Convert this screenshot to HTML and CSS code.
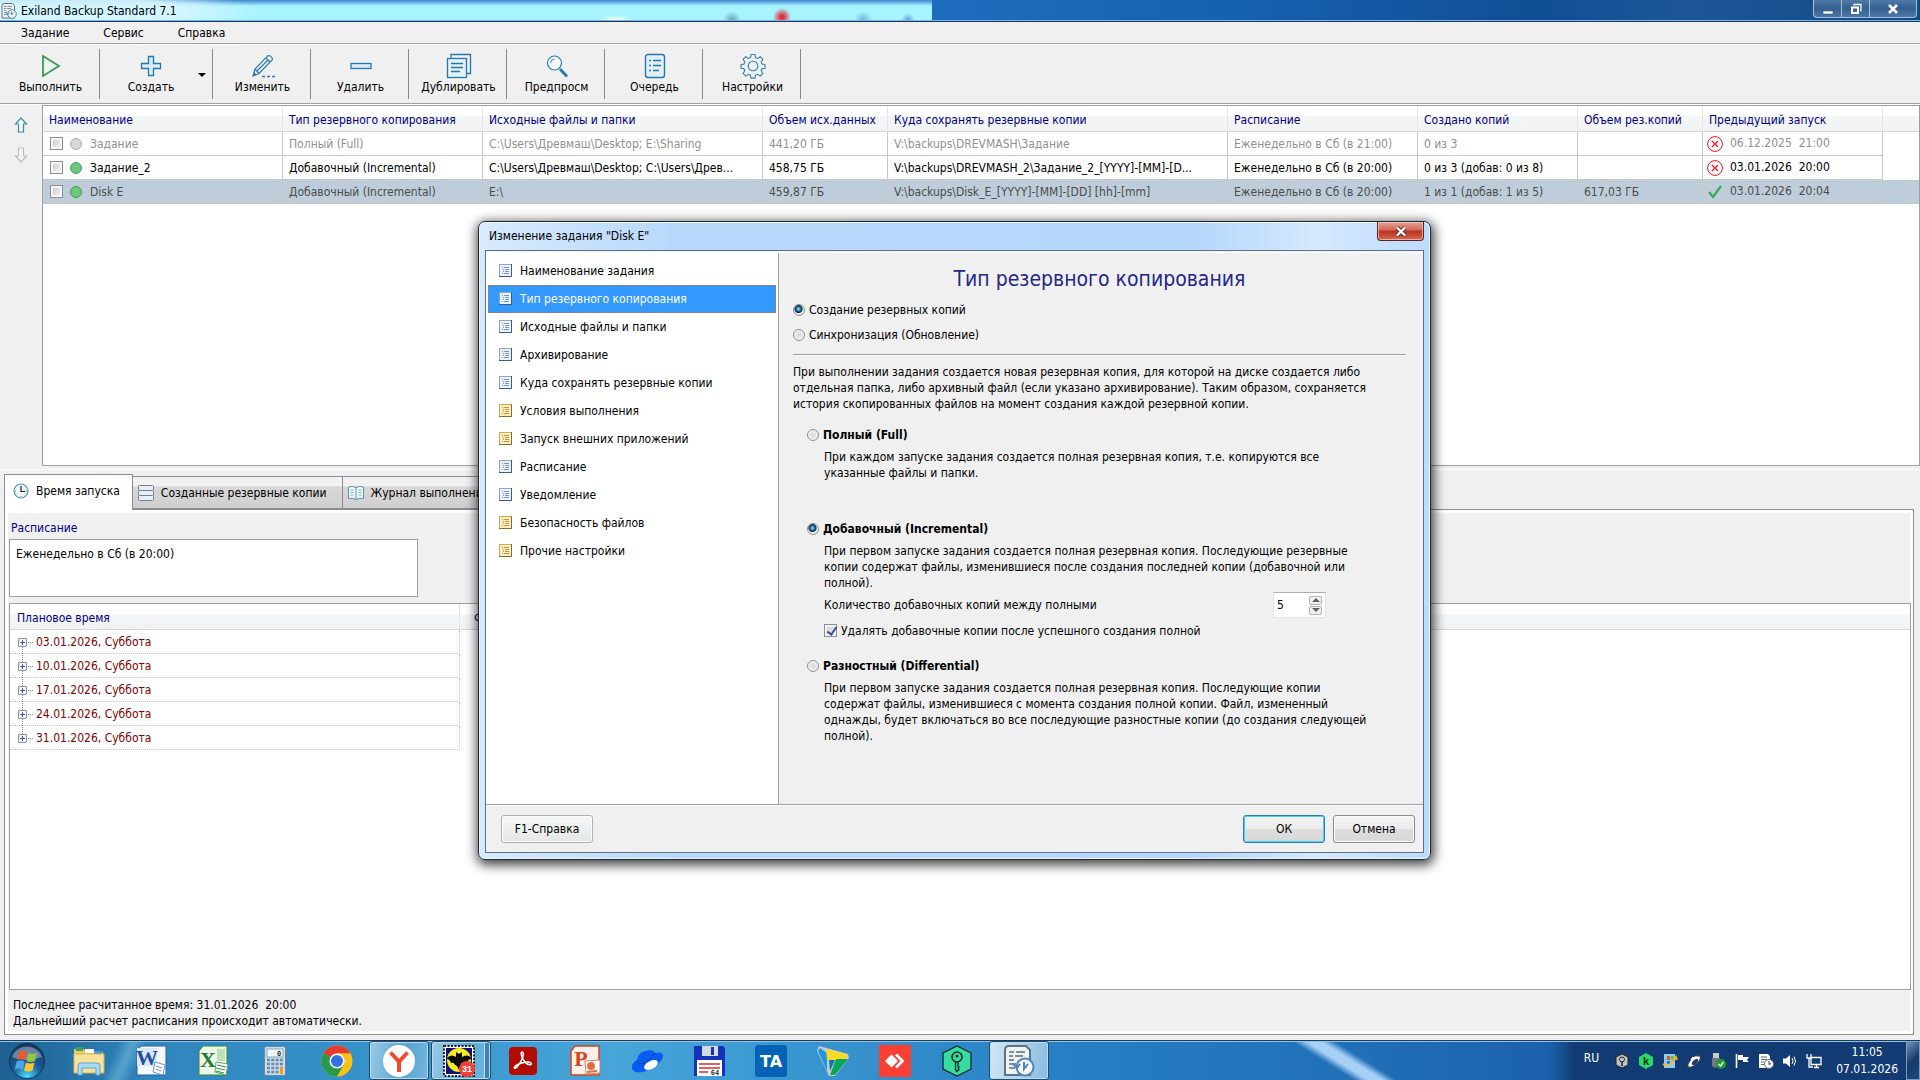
FILE: index.html
```html
<!DOCTYPE html>
<html lang="ru">
<head>
    <meta charset="UTF-8">
    <meta name="viewport" content="width=device-width, initial-scale=1.0">
    <title>Exiland Backup Standard 7.1</title>
    <link rel="stylesheet" href="styles.css">
</head>
<body>
    <!-- shared icons -->
    <svg class="sprites" aria-hidden="true">
        <symbol id="i-page" viewBox="0 0 13 13">
            <rect x=".5" y=".5" width="12" height="12" fill="currentColor" stroke="#8fa6c8"/>
            <path d="M12.5 0v12.5H0" fill="none" stroke="#3d5a86"/>
            <path d="M3 3.5h1M5 3.5h5M4 5.5h1M6 5.5h4M4 7.5h1M6 7.5h4M3 9.5h1M5 9.5h5" stroke="#7c93bd"/>
        </symbol>
        <symbol id="i-page-y" viewBox="0 0 13 13">
            <rect x=".5" y=".5" width="12" height="12" fill="#fbeebb" stroke="#c9ab5a"/>
            <path d="M12.5 0v12.5H0" fill="none" stroke="#8a6a2b"/>
            <path d="M3 3.5h1M5 3.5h5M4 5.5h1M6 5.5h4M4 7.5h1M6 7.5h4M3 9.5h1M5 9.5h5" stroke="#b79a50"/>
        </symbol>
        <symbol id="i-fail" viewBox="0 0 16 16">
            <circle cx="8" cy="8" r="7.4" fill="#fff" stroke="#e8111c"/>
            <path d="M5 5l6 6M11 5l-6 6" stroke="#e8111c" stroke-width="1.2"/>
        </symbol>
        <symbol id="i-app" viewBox="0 0 32 32">
            <path d="M6 1h17l4 4v25H2V5q0-4 4-4z" fill="#eef2f5" stroke="#5f7482" stroke-width="2"/>
            <path d="M6 7h5M6 11h4M6 15h5M13 7h9M12 11h8M6 19h7M6 23h6" stroke="#7d8f9b" stroke-width="2"/>
            <circle cx="22" cy="22" r="8.5" fill="#f5f9ff" stroke="#4f86c2" stroke-width="2"/>
            <path d="M21 17v7l4-5M10 19l4 4 3-4" fill="none" stroke="#4f86c2" stroke-width="2"/>
        </symbol>
    </svg>

    <header class="titlebar">
        <svg class="app-icon"><use href="#i-app"/></svg>
        <h1>Exiland Backup Standard 7.1</h1>
        <div class="window-buttons">
            <button aria-label="Свернуть"><svg width="12" height="12"><path d="M1 8h10v3H1z" fill="#fff" stroke="#33507a" stroke-width=".6"/></svg></button>
            <button aria-label="Восстановить"><svg width="12" height="12"><path d="M4 2.5V1.5h7v6h-1" fill="none" stroke="#fff" stroke-width="1.3"/><path d="M2 4.5h6v5.5H2z" fill="none" stroke="#fff" stroke-width="2"/></svg></button>
            <button aria-label="Закрыть"><svg width="12" height="12"><path d="M2 2l8 8M10 2l-8 8" stroke="#fff" stroke-width="2.6"/></svg></button>
        </div>
    </header>

    <nav class="menubar">
        <button>Задание</button>
        <button>Сервис</button>
        <button>Справка</button>
    </nav>

    <div class="toolbar">
        <button class="tool">
            <svg width="26" height="26" viewBox="0 0 26 26"><path d="M5 3l16 10L5 23z" fill="#e9f5ec" stroke="#3c9a55" stroke-width="1.8"/></svg>
            <span>Выполнить</span>
        </button>
        <button class="tool create">
            <svg width="26" height="26" viewBox="0 0 26 26"><path d="M10.500 3.500h5v7h7v5h-7v7h-5v-7h-7v-5h7z" fill="#dbeaf5" stroke="#2379ab" stroke-width="1.3"/></svg>
            <span>Создать</span>
            <i class="drop"></i>
        </button>
        <button class="tool">
            <svg width="26" height="26" viewBox="0 0 26 26"><path d="M3 23l2-7L18 2.500q4 0 4.500 4L9 20.500zM5 16l4 4.500M16 5l4.500 4.500M7.500 17.500L18 7" fill="none" stroke="#2c7cab" stroke-width="1.200"/><path d="M3 23l1-4 3 3z" fill="#2c7cab"/><path d="M12 23.500h13" stroke="#2c7cab" stroke-width="1.300" stroke-dasharray="3 2"/></svg>
            <span>Изменить</span>
        </button>
        <button class="tool">
            <svg width="26" height="26" viewBox="0 0 26 26"><rect x="3" y="10.500" width="20" height="5" fill="#dbeaf5" stroke="#2379ab" stroke-width="1.300"/></svg>
            <span>Удалить</span>
        </button>
        <button class="tool">
            <svg width="26" height="26" viewBox="0 0 26 26"><path d="M5 5V1.500h19.500v19H21" fill="none" stroke="#2379ab" stroke-width="1.300"/><rect x="1.500" y="5.500" width="19" height="19" fill="#e4f0f8" stroke="#2379ab" stroke-width="1.300"/><path d="M5 10.500h12M5 14.500h12M5 18.500h9" stroke="#2379ab" stroke-width="1.300"/></svg>
            <span>Дублировать</span>
        </button>
        <button class="tool">
            <svg width="26" height="26" viewBox="0 0 26 26"><circle cx="10.500" cy="10" r="7" fill="#f3f8fb" stroke="#2c7cab" stroke-width="1.200"/><path d="M6.500 10q.5-4 4-4" fill="none" stroke="#2c7cab"/><path d="M16 16l7 7.500" stroke="#2c7cab" stroke-width="3"/></svg>
            <span>Предпросм</span>
        </button>
        <button class="tool">
            <svg width="26" height="26" viewBox="0 0 26 26"><rect x="3.500" y="1.500" width="19" height="23" rx="2.500" fill="#e4f0f8" stroke="#2379ab" stroke-width="1.400"/><path d="M7 7.500h2M11 7.500h8M7 12.500h2M11 12.500h8M7 17.500h2M11 17.500h6" stroke="#2379ab" stroke-width="1.400"/></svg>
            <span>Очередь</span>
        </button>
        <button class="tool">
            <svg width="26" height="26" viewBox="0 0 26 26"><path d="M11 1.500h4l.6 3.200 2 .8 2.700-1.800 2.600 2.700-1.700 2.600.8 2 3 .6v3.600l-3 .6-.8 2 1.700 2.600-2.600 2.700-2.700-1.800-2 .8-.6 3h-4l-.6-3-2-.8-2.700 1.800-2.600-2.700 1.700-2.600-.8-2-3-.6v-3.600l3-.6.8-2L3.100 6.400l2.600-2.700 2.700 1.800 2-.8z" fill="#e9f1f6" stroke="#3a7f9f" stroke-width="1.100"/><circle cx="13" cy="13" r="4.800" fill="#f0f0f0" stroke="#3a7f9f" stroke-width="1.100"/></svg>
            <span>Настройки</span>
        </button>
    </div>

    <section class="tasks">
        <div class="order">
            <button aria-label="Вверх"><svg width="14" height="18" viewBox="0 0 14 18"><path d="M7 2l5.500 6H9.500v8h-5V8h-3z" fill="#f7fafc" stroke="#3f86ab" stroke-width="1.200"/></svg></button>
            <button aria-label="Вниз" disabled><svg width="14" height="18" viewBox="0 0 14 18"><path d="M7 16l5.500-6H9.500V2h-5v8h-3z" fill="#f5f5f5" stroke="#bdbdbd" stroke-width="1.200"/></svg></button>
        </div>
        <div class="task-list">
            <table class="grid">
                <colgroup>
                    <col class="w240"><col class="w200"><col class="w280"><col class="w125"><col class="w340"><col class="w190"><col class="w160"><col class="w125"><col class="w180"><col>
                </colgroup>
                <thead>
                    <tr><th>Наименование</th><th>Тип резервного копирования</th><th>Исходные файлы и папки</th><th>Объем исх.данных</th><th>Куда сохранять резервные копии</th><th>Расписание</th><th>Создано копий</th><th>Объем рез.копий</th><th>Предыдущий запуск</th><th></th></tr>
                </thead>
                <tbody>
                    <tr class="off">
                        <td><label class="name"><input type="checkbox"><i class="dot"></i>Задание</label></td>
                        <td>Полный (Full)</td><td>C:\Users\Древмаш\Desktop; E:\Sharing</td><td>441,20 ГБ</td><td>V:\backups\DREVMASH\Задание</td><td>Еженедельно в Сб (в 21:00)</td><td>0 из 3</td><td></td>
                        <td class="last-run"><svg width="16" height="16"><use href="#i-fail"/></svg>06.12.2025&nbsp; 21:00</td><td></td>
                    </tr>
                    <tr>
                        <td><label class="name"><input type="checkbox"><i class="dot"></i>Задание_2</label></td>
                        <td>Добавочный (Incremental)</td><td>C:\Users\Древмаш\Desktop; C:\Users\Древ...</td><td>458,75 ГБ</td><td>V:\backups\DREVMASH_2\Задание_2_[YYYY]-[MM]-[D...</td><td>Еженедельно в Сб (в 20:00)</td><td>0 из 3 (добав: 0 из 8)</td><td></td>
                        <td class="last-run"><svg width="16" height="16"><use href="#i-fail"/></svg>03.01.2026&nbsp; 20:00</td><td></td>
                    </tr>
                    <tr class="selected">
                        <td><label class="name"><input type="checkbox"><i class="dot"></i>Disk E</label></td>
                        <td>Добавочный (Incremental)</td><td>E:\</td><td>459,87 ГБ</td><td>V:\backups\Disk_E_[YYYY]-[MM]-[DD] [hh]-[mm]</td><td>Еженедельно в Сб (в 20:00)</td><td>1 из 1 (добав: 1 из 5)</td><td>617,03 ГБ</td>
                        <td class="last-run"><svg width="16" height="16"><path d="M2 8l4 5 8-11" fill="none" stroke="#35a862" stroke-width="2.200"/></svg>03.01.2026&nbsp; 20:04</td><td></td>
                    </tr>
                </tbody>
            </table>
        </div>
    </section>

    <section class="details">
        <div class="tabs">
            <button class="tab active">
                <svg width="16" height="16" viewBox="0 0 16 16"><circle cx="8" cy="8" r="7" fill="#eaf5f8" stroke="#5d93a6" stroke-width="1.200"/><path d="M8 3v5.500h4" fill="none" stroke="#222" stroke-width="1.200"/><path d="M8 13v1M2 8h1M13 8h1" stroke="#5d93a6"/></svg>
                Время запуска
            </button>
            <button class="tab">
                <svg width="16" height="16" viewBox="0 0 16 16"><g fill="#e8edfa" stroke="#7c7c84"><rect x=".5" y=".5" width="15" height="5" rx="1"/><rect x=".5" y="5.500" width="15" height="5" rx="1"/><rect x=".5" y="10.500" width="15" height="5" rx="1"/></g></svg>
                Созданные резервные копии
            </button>
            <button class="tab">
                <svg width="16" height="16" viewBox="0 0 16 16"><path d="M.5 2q4-1.500 7.500.5 3.500-2 7.500-.5v11.500q-4-1-7.500 1-3.500-2-7.500-1zM8 2.500v12" fill="#eef7fa" stroke="#5b93a8"/><path d="M2.500 5h3M2.500 7.500h3M2.500 10h3M10.500 5h3M10.500 7.500h3M10.500 10h3" stroke="#8db1bf"/></svg>
                Журнал выполнения
            </button>
        </div>
        <div class="tab-page">
            <label class="caption" for="schedule">Расписание</label>
            <textarea id="schedule" readonly>Еженедельно в Сб (в 20:00)</textarea>
            <div class="plan">
                <table class="plan-table">
                    <colgroup><col class="w450"><col></colgroup>
                    <thead><tr><th>Плановое время</th><th>Фактическое время</th></tr></thead>
                    <tbody>
                        <tr><td><button aria-label="Развернуть"></button>03.01.2026, Суббота</td><td></td></tr>
                        <tr><td><button aria-label="Развернуть"></button>10.01.2026, Суббота</td><td></td></tr>
                        <tr><td><button aria-label="Развернуть"></button>17.01.2026, Суббота</td><td></td></tr>
                        <tr><td><button aria-label="Развернуть"></button>24.01.2026, Суббота</td><td></td></tr>
                        <tr><td><button aria-label="Развернуть"></button>31.01.2026, Суббота</td><td></td></tr>
                    </tbody>
                </table>
            </div>
            <p class="status">Последнее расчитанное время: 31.01.2026&nbsp; 20:00<br>Дальнейший расчет расписания происходит автоматически.</p>
        </div>
    </section>

    <footer class="taskbar">
        <button class="start" aria-label="Пуск">
            <svg width="38" height="38" viewBox="0 0 38 38">
                <defs><radialGradient id="orb" cx=".5" cy=".95" r=".9"><stop offset="0" stop-color="#4fe0ff"/><stop offset=".45" stop-color="#1b5f9e"/><stop offset="1" stop-color="#17375f"/></radialGradient></defs>
                <circle cx="19" cy="19" r="17.500" fill="url(#orb)" stroke="#0e3356"/>
                <path d="M4 15a15.500 14 0 0 1 30 0q-15 6-30 0z" fill="#fff" opacity=".35"/>
                <path d="M11 10q4-2.500 8 0l-2 8q-4-2-8 0z" fill="#f0582a"/>
                <path d="M20.500 11q4 2 8.500 0l-2 8q-4 2-8.500 0z" fill="#8fc941"/>
                <path d="M8.700 19.500q4-2 8 0l-2 8q-4-2-8 0z" fill="#4aa8e8"/>
                <path d="M18 20.500q4 2 8.500 0l-2 8q-4 2-8.500 0z" fill="#fdc82f"/>
            </svg>
        </button>
        <div class="apps">
            <button class="app" aria-label="Проводник">
                <svg viewBox="0 0 32 32"><path d="M1 4h10l2 3h17v20H1z" fill="#e9c968"/><path d="M3 2h7v4H3z" fill="#3aa655"/><path d="M12 4h9v4h-9z" fill="#fff"/><path d="M21 6h8v4h-8z" fill="#4b9ad8"/><path d="M1 9h30v19H1z" fill="#f8e39c" stroke="#d9b54f"/><path d="M5 30v-9q0-3 3-3h16q3 0 3 3v9h-4v-7H9v7z" fill="#a9dcf4" stroke="#5aa3cc"/></svg>
            </button>
            <button class="app" aria-label="Word">
                <svg viewBox="0 0 32 32"><path d="M6 1h25v29H2V6z" fill="#f4f8fd" stroke="#2a5db0"/><path d="M2 3h20v18H2z" fill="#dbe8f8"/><text x="12" y="20" class="letter" fill="#1e4fa3">W</text><path d="M20 17l10 3-2 10-10-3z" fill="#fff" stroke="#6c92cc"/><path d="M21 21l6 2M20.500 24l6 2" stroke="#6c92cc"/></svg>
            </button>
            <button class="app" aria-label="Excel">
                <svg viewBox="0 0 32 32"><path d="M6 1h24v29H2V6z" fill="#eef7ea" stroke="#2d8a3c"/><path d="M20 4h8v12h-8z" fill="#bfe0b6"/><text x="11" y="22" class="letter" fill="#1d7a34">X</text><path d="M19 17l12 2-2 11-11-3z" fill="#fff" stroke="#5da566"/><path d="M20 20l9 2M19 23l9 2M19 26l8 2" stroke="#2d8a3c"/></svg>
            </button>
            <button class="app" aria-label="Калькулятор">
                <svg viewBox="0 0 32 32"><rect x="5.500" y="1.500" width="21" height="29" rx="2" fill="#c9ddec" stroke="#6789a8"/><rect x="8" y="4" width="16" height="8" fill="#eef8ff" stroke="#84a6c0"/><text x="20" y="11" class="digits">0</text><path d="M8 15h16M8 19h16M8 23h16M8 27h12" stroke="#6b8ba6" stroke-width="2.500" stroke-dasharray="3 1.300"/><path d="M22.500 22v7" stroke="#f39a1f" stroke-width="3"/></svg>
            </button>
            <button class="app" aria-label="Chrome">
                <svg viewBox="0 0 32 32"><circle cx="16" cy="16" r="15.500" fill="#fbc116"/><path d="M16 16L2.600 8.200A15.500 15.500 0 0 1 29.400 8.200H16z" fill="#e33b2e"/><path d="M2.600 8.200A15.500 15.500 0 0 0 16 31.500l6.800-11.700L16 16z" fill="#269a4b"/><path d="M2.600 8.200L9.500 20 16 16z" fill="#269a4b"/><circle cx="16" cy="16" r="7.600" fill="#fff"/><circle cx="16" cy="16" r="6" fill="#2f72e4"/></svg>
            </button>
            <button class="app running" aria-label="Яндекс Браузер">
                <svg viewBox="0 0 32 32"><circle cx="16" cy="16" r="16" fill="#fff"/><path d="M7.500 7.500l8.500 9 8.500-9M16 16v11" fill="none" stroke="#f5482f" stroke-width="4"/></svg>
            </button>
            <button class="app running stacked" aria-label="The Bat!">
                <svg viewBox="0 0 32 32"><rect x="1" y="1" width="30" height="30" fill="#fff" stroke="#222" stroke-width="2" stroke-dasharray="2 1.500"/><rect x="3" y="3" width="26" height="26" fill="#10127a"/><circle cx="16" cy="15" r="12" fill="#f6ee22"/><path d="M3 14q4-5 8-3l2 1 0-5 3 2 3-2 0 5 2-1q5-2 8 3-4 0-5 4-3-1-4 2-2 0-4 5-2-5-4-5-1-3-4-2-1-4-5-4z" fill="#0a0a0a"/><circle cx="24" cy="24" r="8" fill="#ee4035"/><text x="24" y="27" class="badge">31</text></svg>
            </button>
            <button class="app" aria-label="Acrobat">
                <svg viewBox="0 0 32 32"><rect x="2" y="2" width="28" height="28" rx="4" fill="#b30b00"/><path d="M15 7c3 0 1 8-5 15-3 3-4 0 0-2 5-3 12-4 14-2s-3 3-6-1C15 14 13 7 15 7z" fill="none" stroke="#fff" stroke-width="1.600"/></svg>
            </button>
            <button class="app" aria-label="PowerPoint">
                <svg viewBox="0 0 32 32"><path d="M6 1h24v29H2V6z" fill="#fdf0ea" stroke="#d0461f" stroke-width="1.500"/><text x="12" y="21" class="letter" fill="#d2441c">P</text><path d="M16 16l15-1v13l-14 1z" fill="#fff" stroke="#e07a58"/><circle cx="22" cy="21" r="4" fill="#e56b45"/><path d="M18 27l10-1" stroke="#e56b45" stroke-width="2"/></svg>
            </button>
            <button class="app" aria-label="Яндекс Диск">
                <svg viewBox="0 0 32 32"><path d="M1 24Q0 18 6 15 7 8 14 6q9-2 10 2 8-2 8 3 0 6-13 13T1 24z" fill="#075cf4"/><path d="M6 16q2 5 9 1t9-9" fill="none" stroke="#0b3fb5"/><ellipse cx="20" cy="20" rx="7.500" ry="4" transform="rotate(-28 20 20)" fill="#fff"/></svg>
            </button>
            <button class="app" aria-label="Total Commander">
                <svg viewBox="0 0 32 32"><path d="M1 1h29l2 2v28H1z" fill="#1432b8"/><path d="M9 1h16v10H9z" fill="#d5d8e0"/><path d="M18 2h3v8h-3z" fill="#1432b8"/><path d="M4 15h25v16H4z" fill="#fff"/><path d="M6 19h21M6 23h21M6 27h9" stroke="#cf2f2f" stroke-width="1.300"/><text x="22" y="30" class="digits">64</text></svg>
            </button>
            <button class="app" aria-label="TA">
                <svg viewBox="0 0 32 32"><rect width="32" height="32" rx="3" fill="#0563b5"/><text x="16" y="22" class="ta">TA</text></svg>
            </button>
            <button class="app" aria-label="Punto">
                <svg viewBox="0 0 32 32"><path d="M2 1l29 8 1 4-14 18h-6L0 6z" fill="#c5cbd0"/><path d="M3 3l7 5v18L1 6z" fill="#1d97e0"/><path d="M9 4l21 5v6H10z" fill="#fcd928"/><path d="M19 14h12L18 30h-5z" fill="#0aa558"/><path d="M12 15h6l-5 11z" fill="#1673b1"/></svg>
            </button>
            <button class="app" aria-label="AnyDesk">
                <svg viewBox="0 0 32 32"><rect width="32" height="32" fill="#fb3f35"/><path d="M6 16l6.500-6.500L19 16l-6.500 6.500z" fill="#fff"/><path d="M17 9.500l6.500 6.500-6.500 6.500" fill="none" stroke="#fff" stroke-width="2.800"/></svg>
            </button>
            <button class="app" aria-label="Менеджер паролей">
                <svg viewBox="0 0 32 32"><path d="M16 1l14 7v16l-14 7L2 24V8z" fill="#37dda0" stroke="#102a26" stroke-width="1.300"/><circle cx="16" cy="12" r="5" fill="none" stroke="#0c2b26" stroke-width="1.500"/><circle cx="16" cy="11" r="1.500" fill="#0c2b26"/><path d="M14.500 16v9l1.500 1.500 2-2-1-1 1-1.500-1-1v-5" fill="none" stroke="#0c2b26" stroke-width="1.300"/></svg>
            </button>
            <button class="app running current" aria-label="Exiland Backup">
                <svg><use href="#i-app"/></svg>
            </button>
        </div>
        <div class="tray">
            <span class="lang">RU</span>
            <svg viewBox="0 0 16 16"><path d="M8 1l6 3v8l-6 3-6-3V4z" fill="#bfc3c6" stroke="#222"/><circle cx="8" cy="6.500" r="2.500" fill="none" stroke="#222"/><path d="M8 9v4" stroke="#222" stroke-width="1.500"/></svg>
            <svg viewBox="0 0 16 16"><path d="M8 0l7 4v8l-7 4-7-4V4z" fill="#2bd86a"/><text x="8" y="12" class="k">k</text></svg>
            <svg viewBox="0 0 16 16"><path d="M2 1h11v14H2z" fill="#8ecbf0"/><path d="M5 3h3v4H5z" fill="#e8502d"/><path d="M9 3h3v4H9z" fill="#75b843"/><path d="M5 8h3v3H5z" fill="#2d72c9"/><path d="M1 11q6 5 13-7l1 3" fill="none" stroke="#f5b52e" stroke-width="1.800"/></svg>
            <svg viewBox="0 0 16 16"><path d="M2 14q-1-3 2-6 0-6 10-5 2 4-6 10-4 2-6 1z" fill="#fff" stroke="#333"/><ellipse cx="9" cy="9" rx="4" ry="2" transform="rotate(-45 9 9)" fill="#17426f"/></svg>
            <svg viewBox="0 0 16 16"><path d="M3 0h6v5H3z" fill="#ccc"/><path d="M2 5h8v8q-4 3-8 0z" fill="#737980"/><circle cx="11" cy="11" r="5" fill="#1d9c2c"/><path d="M8.500 11l2 2 3-4" fill="none" stroke="#fff" stroke-width="1.400"/></svg>
            <svg viewBox="0 0 16 16"><path d="M2.500 1v14" stroke="#fff" stroke-width="1.600"/><path d="M4 2h5v2h6l-2 3 2 2H9V7H4z" fill="#fff"/></svg>
            <svg viewBox="0 0 16 16"><path d="M1 1h9l2 2v12H1z" fill="#fff"/><path d="M3 4h6M3 6.500h6M3 9h3M3 11.500h3" stroke="#667"/><circle cx="11" cy="11" r="4.500" fill="#fff" stroke="#667"/><path d="M11 8v3.500l2-1" fill="none" stroke="#345"/></svg>
            <svg viewBox="0 0 16 16"><path d="M1 5.500h3L8 2v12l-4-3.500H1z" fill="#fff"/><path d="M10 5q2 3 0 6M12 3.500q3 4.500 0 9" fill="none" stroke="#fff"/></svg>
            <svg viewBox="0 0 16 16"><path d="M5 4.500h10v7H5zM8 14.500h5M10.500 12v2" fill="none" stroke="#fff" stroke-width="1.300"/><path d="M1 1v4h4V1M3 5v9h4" fill="none" stroke="#fff" stroke-width="1.300"/></svg>
            <time class="clock">11:05<br>07.01.2026</time>
        </div>
        <button class="show-desktop" aria-label="Показать рабочий стол"></button>
    </footer>

    <div class="dialog" role="dialog" aria-labelledby="dialog-title">
        <div class="dialog-title">
            <h2 id="dialog-title">Изменение задания "Disk E"</h2>
            <button class="close" aria-label="Закрыть"><svg width="12" height="11"><path d="M2 1.500l8 8M10 1.500l-8 8" stroke="#5b2a28" stroke-width="4"/><path d="M2 1.500l8 8M10 1.500l-8 8" stroke="#fff" stroke-width="2.400"/></svg></button>
        </div>
        <form class="dialog-body">
            <div class="dialog-main">
                <ul class="pages">
                    <li><svg><use href="#i-page"/></svg>Наименование задания</li>
                    <li class="active"><svg><use href="#i-page"/></svg>Тип резервного копирования</li>
                    <li><svg><use href="#i-page"/></svg>Исходные файлы и папки</li>
                    <li><svg><use href="#i-page"/></svg>Архивирование</li>
                    <li><svg><use href="#i-page"/></svg>Куда сохранять резервные копии</li>
                    <li><svg><use href="#i-page-y"/></svg>Условия выполнения</li>
                    <li><svg><use href="#i-page-y"/></svg>Запуск внешних приложений</li>
                    <li><svg><use href="#i-page"/></svg>Расписание</li>
                    <li><svg><use href="#i-page"/></svg>Уведомление</li>
                    <li><svg><use href="#i-page-y"/></svg>Безопасность файлов</li>
                    <li><svg><use href="#i-page-y"/></svg>Прочие настройки</li>
                </ul>
                <div class="settings">
                    <h3>Тип резервного копирования</h3>
                    <label class="option"><input type="radio" name="mode" checked>Создание резервных копий</label>
                    <label class="option"><input type="radio" name="mode">Синхронизация (Обновление)</label>
                    <hr>
                    <p>При выполнении задания создается новая резервная копия, для которой на диске создается либо<br>отдельная папка, либо архивный файл (если указано архивирование). Таким образом, сохраняется<br>история скопированных файлов на момент создания каждой резервной копии.</p>

                    <div class="kind full">
                        <label class="option"><input type="radio" name="kind">Полный (Full)</label>
                        <p>При каждом запуске задания создается полная резервная копия, т.е. копируются все<br>указанные файлы и папки.</p>
                    </div>
                    <div class="kind">
                        <label class="option"><input type="radio" name="kind" checked>Добавочный (Incremental)</label>
                        <p>При первом запуске задания создается полная резервная копия. Последующие резервные<br>копии содержат файлы, изменившиеся после создания последней копии (добавочной или<br>полной).</p>
                        <div class="count">
                            <label for="count">Количество добавочных копий между полными</label>
                            <div class="spin">
                                <input id="count" type="number" value="5">
                                <div class="spin-buttons">
                                    <button type="button" class="up" aria-label="Больше"></button>
                                    <button type="button" class="down" aria-label="Меньше"></button>
                                </div>
                            </div>
                        </div>
                        <label class="check"><input type="checkbox" checked>Удалять добавочные копии после успешного создания полной</label>
                    </div>
                    <div class="kind">
                        <label class="option"><input type="radio" name="kind">Разностный (Differential)</label>
                        <p>При первом запуске задания создается полная резервная копия. Последующие копии<br>содержат файлы, изменившиеся с момента создания полной копии. Файл, измененный<br>однажды, будет включаться во все последующие разностные копии (до создания следующей<br>полной).</p>
                    </div>
                </div>
            </div>
            <div class="dialog-footer">
                <button type="button" class="btn help">F1-Справка</button>
                <button type="button" class="btn ok">ОК</button>
                <button type="button" class="btn">Отмена</button>
            </div>
        </form>
    </div>
</body>
</html>
```

FILE: styles.css
```css
* {
    margin: 0;
    padding: 0;
    box-sizing: border-box;
}

body {
    display: flex;
    flex-direction: column;
    height: 100vh;
    overflow: hidden;
    background: #f0f0f0;
    color: #000;
    font-family: "DejaVu Sans Condensed", "DejaVu Sans", sans-serif;
    font-size: 12px;
    line-height: 16px;
    white-space: nowrap;
}

button, input, textarea {
    font: inherit;
    color: inherit;
}

button {
    border: none;
    background: none;
}

svg {
    display: block;
    flex: none;
}

.sprites {
    display: none;
}

/* title bar */
.titlebar {
    display: flex;
    align-items: center;
    height: 22px;
    padding-left: 1px;
    border-bottom: 1px solid #1b3a63;
    box-shadow: inset 0 -1px #7fb2dd;
    background:
        radial-gradient(ellipse 190px 22px at 70px 11px, rgba(215, 246, 255, 0.9) 60%, transparent),
        radial-gradient(ellipse 18px 6px at 616px 21px, #fff, transparent),
        radial-gradient(circle 9px at 732px 20px, #5fa3b8, transparent),
        radial-gradient(circle 9px at 782px 17px, #e0303a 20%, transparent),
        radial-gradient(circle 9px at 863px 20px, #6bb4e0, transparent),
        radial-gradient(circle 7px at 908px 20px, #5fa8d8, transparent),
        linear-gradient(#3f86d0, #a8f4fe 6px) 0 0 / 932px 100% no-repeat,
        linear-gradient(90deg, #1e6cbd 50%, #1660b0 65%, #104e94 80%, #1c5698 88%, #104a86);
}

.titlebar h1 {
    flex: 1;
    padding-left: 4px;
    font-size: 12px;
    font-weight: normal;
}

.app-icon {
    width: 16px;
    height: 18px;
}

.window-buttons {
    display: flex;
    align-self: flex-start;
    height: 18px;
    margin-right: 3px;
    border: 1px solid #a9bfd8;
    border-top: none;
    border-radius: 0 0 4px 4px;
    background: linear-gradient(#5079a8, #33608f 50%, #4a78a8);
}

.window-buttons button {
    display: flex;
    align-items: center;
    justify-content: center;
    width: 28px;
    border-right: 1px solid #a9bfd8;
}

.window-buttons button:last-child {
    width: 46px;
    border: none;
}

/* menu and toolbar */
.menubar {
    display: flex;
    gap: 34px;
    height: 22px;
    padding-left: 21px;
    border-bottom: 1px solid #a0a0a0;
}

.toolbar {
    display: flex;
    height: 60px;
    padding: 4px 0;
    border-top: 1px solid #fff;
    border-bottom: 1px solid #a0a0a0;
}

.tool {
    position: relative;
    display: flex;
    flex-direction: column;
    align-items: center;
    justify-content: center;
    width: 98px;
    padding: 0 0 1px 2px;
    border-right: 1px solid #8a8a8a;
}

.tool:first-child {
    width: 100px;
}

.tool.create {
    width: 113px;
    padding-right: 12px;
}

.drop {
    position: absolute;
    right: 6px;
    top: 24px;
    border: 4px solid transparent;
    border-top-color: #000;
    border-bottom: none;
}

/* task list */
.tasks {
    display: flex;
    height: 362px;
    border-top: 1px solid #fff;
}

.order {
    display: flex;
    flex-direction: column;
    align-items: center;
    gap: 12px;
    width: 41px;
    padding-top: 11px;
}

.task-list {
    flex: 1;
    margin-left: 1px;
    border: 1px solid #a0a0a0;
    background: #fff;
    overflow: hidden;
}

table {
    width: 100%;
    table-layout: fixed;
    border-collapse: separate;
    border-spacing: 0;
}

.w125 { width: 125px; }
.w160 { width: 160px; }
.w180 { width: 180px; }
.w190 { width: 190px; }
.w200 { width: 200px; }
.w240 { width: 240px; }
.w280 { width: 280px; }
.w340 { width: 340px; }
.w450 { width: 450px; }

th {
    height: 26px;
    padding: 2px 7px 0 6px;
    border-right: 1px solid #e3e5e8;
    border-bottom: 1px solid #d5d5d5;
    background: linear-gradient(#fff 40%, #f5f6f8 41%, #f0f2f4);
    color: #000080;
    font-weight: normal;
    text-align: left;
}

th:last-child {
    border-right: none;
}

.grid td {
    height: 24px;
    padding: 0 7px 0 6px;
    border-right: 1px solid #c8c8c8;
    border-bottom: 1px solid #c8c8c8;
}

.grid td:last-child {
    border: none;
}

.off {
    color: #909090;
}

.selected {
    background: #bfcdda;
    color: #4c4c4c;
}

.name {
    display: flex;
    align-items: center;
    gap: 7px;
    padding-left: 1px;
}

.dot {
    width: 12px;
    height: 12px;
    margin-right: 1px;
    border: 1px solid #4d9a5c;
    border-radius: 50%;
    background: #6cc97c;
}

.off .dot {
    border-color: #adadad;
    background: #d8d8d8;
}

.last-run svg {
    display: inline-block;
    margin: 0 7px 0 -2px;
    vertical-align: middle;
}

input[type="checkbox"] {
    appearance: none;
    width: 13px;
    height: 13px;
    border: 1px solid #8e8f8f;
    background: linear-gradient(135deg, #c4c8ce, #f6f6f6);
    box-shadow: inset 0 0 0 2px #f4f4f4;
}

input[type="checkbox"]:checked::after {
    content: '';
    display: block;
    width: 4px;
    height: 8px;
    margin: 0 0 0 4px;
    border: solid #36509c;
    border-width: 0 2px 2px 0;
    transform: rotate(35deg);
}

/* lower tabs */
.details {
    flex: 1;
    display: flex;
    flex-direction: column;
    margin-top: 3px;
    padding: 5px 6px 5px 4px;
    border-top: 1px solid #fff;
}

.tabs {
    display: flex;
    align-items: flex-end;
    height: 34px;
}

.tab {
    display: flex;
    align-items: center;
    gap: 7px;
    height: 33px;
    padding: 0 15px 0 5px;
    border: 1px solid #898c95;
    border-left: none;
    background: linear-gradient(#f2f2f2 30%, #d8d8d8 31%, #cfcfcf);
}

.tab.active {
    position: relative;
    height: 36px;
    margin-bottom: -1px;
    padding: 0 12px 4px 8px;
    border-left: 1px solid #898c95;
    border-bottom: none;
    background: #fff;
}

.tab-page {
    flex: 1;
    display: flex;
    flex-direction: column;
    padding: 7px 1px 4px 4px;
    border: 1px solid #898c95;
    box-shadow: inset 0 0 0 3px #fff;
}

.caption {
    align-self: flex-start;
    padding: 3px 2px 2px;
    color: #000080;
}

#schedule {
    width: 409px;
    height: 58px;
    margin-top: 1px;
    padding: 6px;
    border: 1px solid #a0a0a0;
    outline: none;
    background: #fff;
    resize: none;
}

.plan {
    flex: 1;
    margin: 6px 1px 0 0;
    border: 1px solid #a0a0a0;
    background: #fff;
}

.plan-table td {
    height: 24px;
    padding: 0 8px;
    border-right: 1px dotted #c0c0c0;
    border-bottom: 1px dotted #c0c0c0;
    color: #800000;
}

.plan-table td:last-child {
    border: none;
}

.plan-table th:first-child {
    padding-left: 7px;
}

.plan-table th:last-child {
    padding-left: 14px;
}

.plan-table td button {
    position: relative;
    display: inline-block;
    width: 9px;
    height: 9px;
    margin-right: 9px;
    border: 1px solid #919191;
    border-radius: 1px;
    background:
        linear-gradient(#3b56a0, #3b56a0) center / 5px 1px no-repeat,
        linear-gradient(#3b56a0, #3b56a0) center / 1px 5px no-repeat,
        #f3f3f3;
}

/* dotted tree lines next to the expanders */
.plan-table td button::after {
    content: '';
    position: absolute;
    left: 9px;
    top: 3px;
    width: 5px;
    border-top: 1px dotted #909090;
}

.plan-table tr:not(:last-child) td button::before {
    content: '';
    position: absolute;
    left: 3px;
    top: 8px;
    height: 15px;
    border-left: 1px dotted #909090;
}

.status {
    padding: 7px 4px 1px;
}

/* taskbar */
.taskbar {
    display: flex;
    height: 40px;
    border-top: 1px solid #1f3b57;
    box-shadow: inset 0 1px #8fc5e8;
    background:
        linear-gradient(90deg, transparent 1550px, rgba(12, 40, 84, 0.65) 1575px),
        linear-gradient(32deg, transparent 38%, #a8d0f6 46%, #a8d0f6 54%, transparent 62%) 1286px 0 / 116px 100% no-repeat,
        linear-gradient(115deg, transparent 40%, rgba(150, 215, 240, 0.4) 50%, transparent 60%) 60px 0 / 130px 100% no-repeat,
        linear-gradient(90deg, #1d6091, #2f86bd 8%, #3793cb 20%, #47a5d9 32%, #3590cc 45%, #2780c4 55%, #2070b8 70%, #1b5faa 82%, #1b5faa);
    color: #fff;
}

.start {
    width: 59px;
    padding-left: 8px;
}

.apps {
    display: flex;
    flex: 1;
    gap: 2px;
}

.app {
    display: flex;
    align-items: center;
    justify-content: center;
    width: 60px;
}

.app svg {
    width: 32px;
    height: 32px;
}

.running {
    border: 1px solid #1e4d74;
    border-radius: 3px;
    box-shadow: inset 0 0 0 1px #b9dcf0;
    background: linear-gradient(100deg, rgba(255, 255, 255, 0.5), rgba(255, 255, 255, 0.15) 60%, rgba(255, 255, 255, 0.3));
}

.stacked {
    padding-right: 5px;
    box-shadow: inset 0 0 0 1px #b9dcf0, inset -5px 0 #3c83b3, inset -6px 0 #b9dcf0;
}

.current {
    background: linear-gradient(100deg, rgba(255, 255, 255, 0.8), rgba(255, 255, 255, 0.45));
}

.letter {
    font: bold 22px "Liberation Serif", serif;
    text-anchor: middle;
}

.digits {
    fill: #333;
    font: bold 7px "DejaVu Sans Mono", monospace;
    text-anchor: middle;
}

.badge {
    fill: #fff;
    font: bold 9px "Liberation Sans", sans-serif;
    text-anchor: middle;
}

.ta {
    fill: #fff;
    font: bold 16px "DejaVu Sans", sans-serif;
    text-anchor: middle;
}

.k {
    fill: #0c3a20;
    font: bold 11px "Liberation Sans", sans-serif;
    text-anchor: middle;
}

.tray {
    display: flex;
    align-items: center;
    gap: 8px;
}

.tray svg {
    width: 16px;
    height: 16px;
}

.lang {
    padding: 0 7px 6px 0;
}

.clock {
    padding: 0 8px 0 6px;
    line-height: 17px;
    text-align: center;
}

.show-desktop {
    width: 14px;
    border: 1px solid #7c9cbd;
    background: linear-gradient(135deg, #6f93b8, #173b69 50%, #1d4a7d);
}

/* task dialog */
.dialog {
    position: absolute;
    left: 478px;
    top: 221px;
    width: 953px;
    height: 639px;
    display: flex;
    flex-direction: column;
    padding: 0 6px 6px;
    border: 1px solid #1c2733;
    border-radius: 7px;
    box-shadow: inset 0 0 0 1px #f0f8ff, 1px 3px 12px 2px rgba(0, 0, 0, 0.75);
    background: linear-gradient(90deg, #d8eafd, #b9d9fc 20%, #b5d7fc 75%, #d5e8fd 88%, #bcdbfd);
}

.dialog-title {
    display: flex;
    align-items: flex-start;
    justify-content: space-between;
    height: 28px;
}

.dialog-title h2 {
    padding: 6px 4px;
    font-size: 12px;
    font-weight: normal;
}

.close {
    display: flex;
    align-items: center;
    justify-content: center;
    width: 47px;
    height: 19px;
    border: 1px solid #5c2420;
    border-top: none;
    border-radius: 0 0 4px 4px;
    box-shadow: inset 0 0 0 1px rgba(255, 220, 210, 0.6);
    background: linear-gradient(#e4a296, #d0675a 45%, #b8301f 50%, #d36a50);
}

.dialog-body {
    flex: 1;
    display: flex;
    flex-direction: column;
    border: 1px solid #5f7285;
    background: #f0f0f0;
}

.dialog-main {
    flex: 1;
    display: flex;
    margin-top: 1px;
    border-top: 1px solid #fff;
    border-bottom: 1px solid #a0a0a0;
}

.pages {
    width: 293px;
    padding: 4px 2px 0;
    border-right: 1px solid #a0a0a0;
    background: #fff;
    list-style: none;
}

.pages li {
    display: flex;
    align-items: center;
    gap: 8px;
    height: 28px;
    padding-left: 11px;
}

.pages svg {
    width: 13px;
    height: 13px;
    margin-bottom: 2px;
    color: #e9f1fd;
}

.pages .active {
    outline: 1px dotted #c07030;
    outline-offset: -1px;
    background: #3399ff;
    color: #fff;
}

.settings {
    flex: 1;
    padding: 11px 17px 0 14px;
}

.settings h3 {
    margin-bottom: 3px;
    color: #25258c;
    font-size: 21px;
    font-weight: normal;
    line-height: 30px;
    text-align: center;
}

.option, .check {
    display: flex;
    align-items: center;
    gap: 4px;
    height: 25px;
}

.settings hr {
    margin: 7px 0 8px;
    border: none;
    border-top: 1px solid #a0a0a0;
    border-bottom: 1px solid #fff;
}

.kind {
    padding: 10px 0 0 31px;
}

.kind .option {
    margin: 0 0 2px -17px;
    font-weight: bold;
}

.full {
    margin-bottom: 25px;
}

input[type="radio"] {
    appearance: none;
    width: 12px;
    height: 12px;
    border: 1px solid #8e8f8f;
    border-radius: 50%;
    background: radial-gradient(circle, #d4d4d4, #f8f8f8 80%);
}

input[type="radio"]:checked {
    background: radial-gradient(circle at 45% 40%, #6fd0f5 8%, #12456f 35%, #0e3357 45%, #e8eef2 55%);
}

.count {
    display: flex;
    align-items: center;
    height: 26px;
    margin-top: 1px;
}

.count label {
    flex: 1;
}

.spin {
    display: flex;
    align-items: center;
    width: 53px;
    height: 26px;
    margin-right: 80px;
    border: 1px solid #e2e3ea;
    border-top-color: #abadb3;
    background: #fff;
}

.spin input {
    width: 35px;
    padding-left: 3px;
    border: none;
    outline: none;
    background: none;
    appearance: textfield;
}

.spin input::-webkit-inner-spin-button {
    display: none;
}

.spin-buttons {
    display: flex;
    flex-direction: column;
    gap: 1px;
}

.spin-buttons button {
    display: flex;
    align-items: center;
    justify-content: center;
    width: 13px;
    height: 9px;
    border: 1px solid #b5b5b5;
    border-radius: 2px;
    background: #f0f0f0;
}

.spin-buttons button::after {
    content: '';
    border: 4px solid transparent;
    border-top: none;
    border-bottom-color: #606060;
}

.spin-buttons .down::after {
    border-top: 4px solid #606060;
    border-bottom: none;
}

.dialog-footer {
    display: flex;
    gap: 8px;
    height: 47px;
    padding: 9px 8px 9px 15px;
    border-top: 1px solid #fff;
}

.btn {
    width: 82px;
    height: 28px;
    border: 1px solid #8c8c8c;
    border-radius: 3px;
    box-shadow: inset 0 0 0 1px #fcfcfc;
    background: linear-gradient(#f4f4f4, #ececec 48%, #dedede 52%, #d8d8d8);
}

.btn.help {
    width: 92px;
    margin-right: auto;
    border-color: #adb2b5;
    background: linear-gradient(#f5f8f7, #edf0ef 50%, #e4e7e6);
}

.btn.ok {
    border-color: #2c7fb5;
    box-shadow: inset 0 0 0 1px #48d1f5;
}
```
